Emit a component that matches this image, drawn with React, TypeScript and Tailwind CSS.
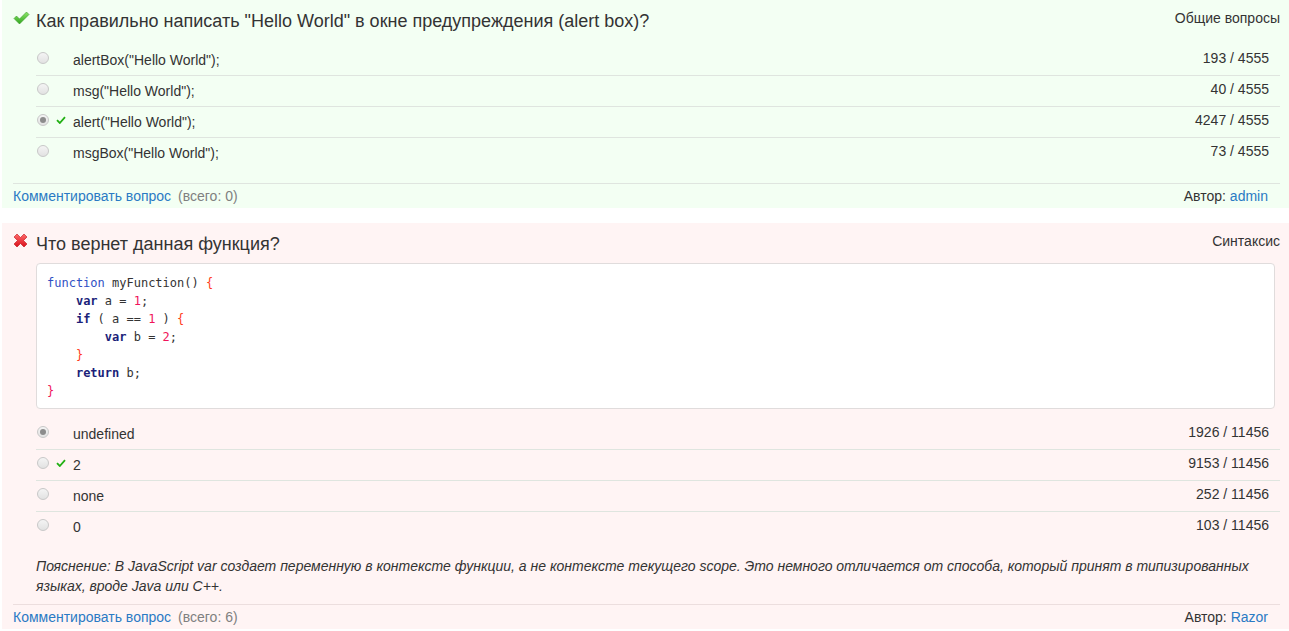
import React from "react";

const font = { fontFamily: '"Liberation Sans", Arial, sans-serif' };

function BigCheck() {
  return (
    <svg width="17" height="14" viewBox="0 0 17 14" className="shrink-0">
      <defs>
        <linearGradient id="gc" x1="0" y1="0" x2="0" y2="1">
          <stop offset="0" stopColor="#8ee86a" />
          <stop offset="1" stopColor="#2fa51e" />
        </linearGradient>
      </defs>
      <path d="M1 7.5 L3.5 5 L6.5 8 L13.5 1 L16 3.5 L6.5 13 Z" fill="url(#gc)" stroke="#3a9a2a" strokeWidth="0.6" strokeLinejoin="round" />
    </svg>
  );
}

function BigCross() {
  return (
    <svg width="15" height="15" viewBox="0 0 15 15" className="shrink-0">
      <defs>
        <linearGradient id="rc" x1="0" y1="0" x2="0" y2="1">
          <stop offset="0" stopColor="#ff6a6a" />
          <stop offset="1" stopColor="#d90f1a" />
        </linearGradient>
      </defs>
      <path d="M1 4 L4 1 L7.5 4.5 L11 1 L14 4 L10.5 7.5 L14 11 L11 14 L7.5 10.5 L4 14 L1 11 L4.5 7.5 Z" fill="url(#rc)" stroke="#c0121a" strokeWidth="0.6" strokeLinejoin="round" />
    </svg>
  );
}

function SmallCheck() {
  return (
    <svg width="10" height="8" viewBox="0 0 10 8">
      <path d="M1 4.2 L3.8 7 L9 1.2" fill="none" stroke="#22b014" strokeWidth="1.8" />
    </svg>
  );
}

function Radio({ checked }: { checked?: boolean }) {
  return (
    <span className="inline-flex h-[12px] w-[12px] items-center justify-center rounded-full border border-[#c8c8c8] bg-gradient-to-b from-[#f4f4f4] to-[#e2e2e2]">
      {checked && <span className="h-[6px] w-[6px] rounded-full bg-[#8c8c8c]" />}
    </span>
  );
}

type Opt = { text: string; count: string; checked?: boolean; correct?: boolean };

function Option({ o, first }: { o: Opt; first: boolean }) {
  return (
    <div className={`flex h-[31px] items-center ${first ? "" : "border-t border-[#dfe5df]"}`}>
      <div className="flex w-[37px] items-center pl-[1px] -mt-[4px]">
        <Radio checked={o.checked} />
        <span className="ml-[7px] w-[10px]">{o.correct && <SmallCheck />}</span>
      </div>
      <span className="text-[14px] text-[#333] pt-[1px]">{o.text}</span>
      <span className="ml-auto mr-[11px] -mt-[3px] text-[14px] text-[#333]">{o.count}</span>
    </div>
  );
}

function Footer({ total, author, border }: { total: string; author: string; border: string }) {
  return (
    <div className={`mr-[9px] flex h-[25px] items-center border-t ${border} text-[14px]`}>
      <a className="text-[#2a7ac4]">Комментировать вопрос</a>
      <span className="ml-[7px] text-[#808080]">(всего: {total})</span>
      <span className="ml-auto mr-[12px] text-[#333]">
        Автор: <a className="text-[#2a7ac4]">{author}</a>
      </span>
    </div>
  );
}

const K = ({ children }: { children: React.ReactNode }) => (
  <span className="font-bold text-[#1c1f7a]">{children}</span>
);
const N = ({ children }: { children: React.ReactNode }) => (
  <span className="text-[#f0145a]">{children}</span>
);
const B = ({ children }: { children: React.ReactNode }) => (
  <span className="text-[#ff3b1a]">{children}</span>
);

export default function App() {
  const opts1: Opt[] = [
    { text: 'alertBox("Hello World");', count: "193 / 4555" },
    { text: 'msg("Hello World");', count: "40 / 4555" },
    { text: 'alert("Hello World");', count: "4247 / 4555", checked: true, correct: true },
    { text: 'msgBox("Hello World");', count: "73 / 4555" },
  ];
  const opts2: Opt[] = [
    { text: "undefined", count: "1926 / 11456", checked: true },
    { text: "2", count: "9153 / 11456", correct: true },
    { text: "none", count: "252 / 11456" },
    { text: "0", count: "103 / 11456" },
  ];
  return (
    <div className="min-h-[631px] bg-white pl-[2px]" style={font}>
      {/* Card 1 */}
      <div className="bg-[#f3fff3] pl-[11px] pt-[8px]">
        <div className="flex h-[26px] items-center pr-[9px]">
          <span className="-mt-[7px] w-[23px]"><BigCheck /></span>
          <span className="text-[18px] text-[#333]">Как правильно написать "Hello World" в окне предупреждения (alert box)?</span>
          <span className="ml-auto -mt-[5px] text-[14px] text-[#333]">Общие вопросы</span>
        </div>
        <div className="mt-[10px] mr-[9px] ml-[23px]">
          {opts1.map((o, i) => (
            <Option key={i} o={o} first={i === 0} />
          ))}
        </div>
        <div className="h-[15px]" />
        <Footer total="0" author="admin" border="border-[#dfe5df]" />
      </div>

      <div className="h-[15px]" />

      {/* Card 2 */}
      <div className="bg-[#fff4f4] pl-[11px] pt-[8px]">
        <div className="flex h-[26px] items-center pr-[9px]">
          <span className="-mt-[7px] w-[23px]"><BigCross /></span>
          <span className="text-[18px] text-[#333]">Что вернет данная функция?</span>
          <span className="ml-auto -mt-[5px] text-[14px] text-[#333]">Синтаксис</span>
        </div>
        <div className="ml-[23px] mr-[14px] mt-[6px] rounded-[4px] border border-[#e0dcdc] bg-white px-[10px] pt-[10px] pb-[8px]">
          <pre
            className="text-[12px] leading-[18px] text-[#333]"
            style={{ fontFamily: '"DejaVu Sans Mono", "Liberation Mono", monospace' }}
          >
            <span className="text-[#2f4fc4]">function</span> myFunction() <B>{"{"}</B>
            {"\n    "}
            <K>var</K> a = <N>1</N>;
            {"\n    "}
            <K>if</K> ( a == <N>1</N> ) <B>{"{"}</B>
            {"\n        "}
            <K>var</K> b = <N>2</N>;
            {"\n    "}
            <B>{"}"}</B>
            {"\n    "}
            <K>return</K> b;
            {"\n"}
            <N>{"}"}</N>
          </pre>
        </div>
        <div className="mt-[9px] mr-[9px] ml-[23px]">
          {opts2.map((o, i) => (
            <Option key={i} o={o} first={i === 0} />
          ))}
        </div>
        <p className="ml-[23px] mr-[14px] mt-[14px] text-[14px] italic leading-[20px] text-[#333]">
          Пояснение: В JavaScript var создает переменную в контексте функции, а не контексте текущего scope. Это немного отличается от способа, который принят в типизированных языках, вроде Java или C++.
        </p>
        <div className="h-[8px]" />
        <Footer total="6" author="Razor" border="border-[#ecdede]" />
      </div>
    </div>
  );
}
